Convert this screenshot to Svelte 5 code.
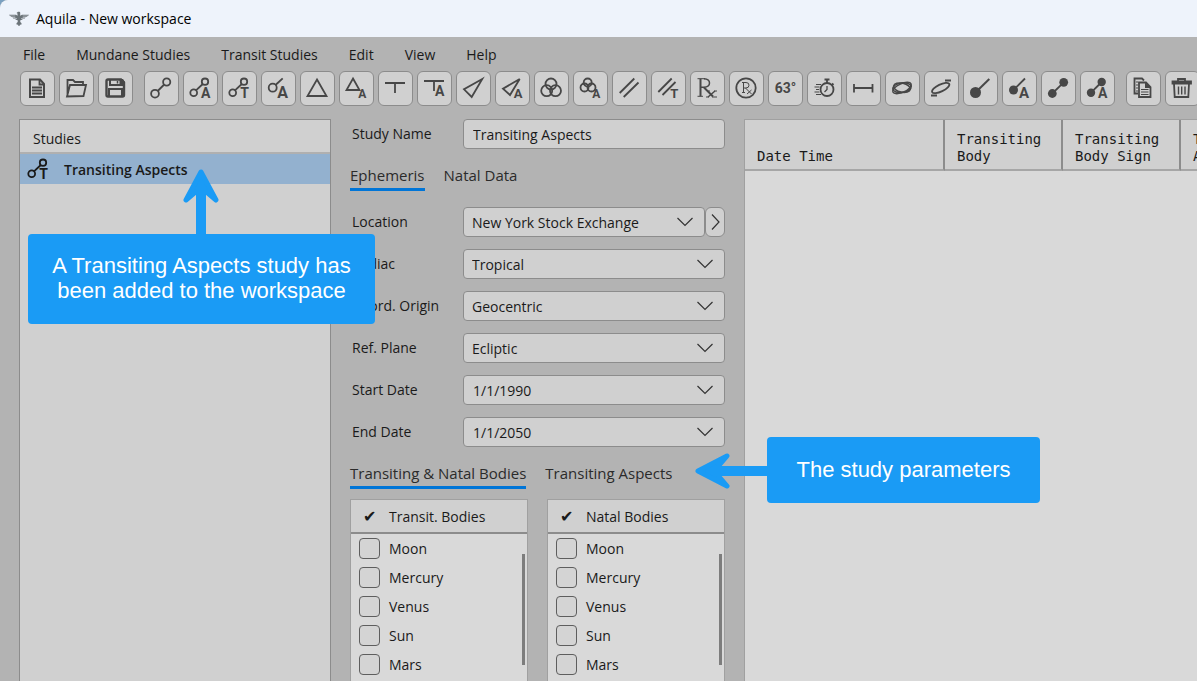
<script lang="ts">
  const menus = ['File', 'Mundane Studies', 'Transit Studies', 'Edit', 'View', 'Help'];

  const toolGroups: { id: string; label: string }[][] = [
    [
      { id: 'new', label: 'New workspace' },
      { id: 'open', label: 'Open workspace' },
      { id: 'save', label: 'Save workspace' },
    ],
    [
      { id: 'aspect', label: 'Aspects' },
      { id: 'aspect-a', label: 'Aspects, all' },
      { id: 'aspect-t', label: 'Transiting Aspects' },
      { id: 'single-a', label: 'Single body' },
      { id: 'triangle', label: 'Triangle' },
      { id: 'triangle-a', label: 'Triangle, all' },
      { id: 'tee', label: 'T-square' },
      { id: 'tee-a', label: 'T-square, all' },
      { id: 'yod', label: 'Yod' },
      { id: 'yod-a', label: 'Yod, all' },
      { id: 'cluster', label: 'Cluster' },
      { id: 'cluster-a', label: 'Cluster, all' },
      { id: 'parallel', label: 'Parallels' },
      { id: 'parallel-t', label: 'Transiting parallels' },
      { id: 'retro', label: 'Retrograde' },
      { id: 'retro-c', label: 'Retrograde period' },
      { id: 'degree', label: 'Degree' },
      { id: 'speed', label: 'Speed' },
      { id: 'distance', label: 'Distance' },
      { id: 'orbit', label: 'Orbits' },
      { id: 'latitude', label: 'Latitude extremes' },
      { id: 'ball', label: 'Ingress' },
      { id: 'ball-a', label: 'Ingress, all' },
      { id: 'pair', label: 'Body pair' },
      { id: 'pair-a', label: 'Body pair, all' },
    ],
    [
      { id: 'copy', label: 'Copy study' },
      { id: 'delete', label: 'Delete study' },
    ],
  ];

  const selects = [
    { id: 'zodiac', label: 'Zodiac', value: 'Tropical' },
    { id: 'origin', label: 'Coord. Origin', value: 'Geocentric' },
    { id: 'plane', label: 'Ref. Plane', value: 'Ecliptic' },
  ];
  const dates = [
    { id: 'start', label: 'Start Date', value: '1/1/1990' },
    { id: 'end', label: 'End Date', value: '1/1/2050' },
  ];

  const bodies = ['Moon', 'Mercury', 'Venus', 'Sun', 'Mars'];
  const bodyLists = [
    { id: 'transit', title: 'Transit. Bodies' },
    { id: 'natal', title: 'Natal Bodies' },
  ];

  let ephemerisTab = $state('Ephemeris');
  let bodiesTab = $state('Transiting & Natal Bodies');
  let studyName = $state('Transiting Aspects');
</script>

{#snippet chevron()}
  <svg class="chevron" width="16" height="10" viewBox="0 0 16 10" aria-hidden="true">
    <path d="M.5 1 8 8.5 15.5 1" />
  </svg>
{/snippet}

{#snippet tabs(names: string[], current: string, pick: (name: string) => void)}
  <div class="tabs" role="tablist">
    {#each names as name}
      <button
        class="tab"
        class:tab-active={name === current}
        role="tab"
        aria-selected={name === current}
        onclick={() => pick(name)}>{name}</button>
    {/each}
  </div>
{/snippet}

{#snippet icon(id: string)}
  <svg class="icon" viewBox="1 1 33 33" aria-hidden="true">
    {#if id === 'new'}
      <path stroke-width="2" d="M10 8.5h10l4 4.5v13H10z" />
      <path d="M19.5 8.5v5H24M12 16.5h10M12 19.5h10M12 22.5h10" />
    {:else if id === 'open'}
      <path d="M8.5 25V9H14l2 2h8v3M8 25.5 11 14h16l-2.5 11z" />
    {:else if id === 'save'}
      <path stroke-width="2.4" d="M8.5 10q0-1.5 1.5-1.5h13l3 3V24q0 1.5-1.5 1.5H10q-1.5 0-1.5-1.5z" />
      <path stroke-width="2" d="M11 25v-7h13v7M12 9v5h10" />
      <path stroke-width="1.5" d="M19.5 10v2.5" />
      <path class="fill" d="M21.5 8H25l2 3v4h-5.5z" />
    {:else if id === 'aspect'}
      <circle cx="11" cy="22.7" r="3.9" /><circle cx="22.7" cy="11" r="3.6" />
      <path d="M13.7 20 20.2 13.5" />
    {:else if id === 'aspect-a' || id === 'aspect-t'}
      <circle cx="10.7" cy="21.7" r="3.4" /><circle cx="22" cy="10.7" r="3.2" />
      <path d="M13 19.3 19.8 13" />
      <text x="22.7" y="27" font-size="14">{id === 'aspect-a' ? 'A' : 'T'}</text>
    {:else if id === 'single-a'}
      <circle cx="11.7" cy="16.7" r="4" /><path d="M14.5 14 21.7 7.3" />
      <text x="21.5" y="26.7" font-size="16">A</text>
    {:else if id === 'triangle'}
      <path d="M17 8.5 26.5 25h-19z" />
    {:else if id === 'triangle-a'}
      <path d="M14 7.5 20.5 19h-13z" />
      <text x="23.2" y="27" font-size="12">A</text>
    {:else if id === 'tee'}
      <path d="M7 12h20M17 12v10" />
    {:else if id === 'tee-a'}
      <path d="M7 10h20M17 10v10" />
      <text x="22.7" y="25" font-size="14">A</text>
    {:else if id === 'yod'}
      <path d="M26.3 8 8 18.3 15.7 26z" />
    {:else if id === 'yod-a'}
      <path d="M24.7 8 8 17.7 15 24z" />
      <text x="23" y="27" font-size="13">A</text>
    {:else if id === 'cluster'}
      <circle cx="17" cy="13" r="5.5" /><circle cx="12.7" cy="19.7" r="5.5" /><circle cx="21.5" cy="19.7" r="5.5" />
    {:else if id === 'cluster-a'}
      <circle cx="14.7" cy="11.5" r="4" /><circle cx="11.5" cy="16.5" r="4" /><circle cx="18.5" cy="16.5" r="4" />
      <text x="23.2" y="27" font-size="12">A</text>
    {:else if id === 'parallel'}
      <path d="M22.3 7.5 7.7 22M26.5 11.5 11.7 26" />
    {:else if id === 'parallel-t'}
      <path d="M20.7 7.5 7.3 21M24.5 11 11.5 24" />
      <text x="23.2" y="27" font-size="13">T</text>
    {:else if id === 'retro'}
      <path stroke-width="1" d="M7.5 7.7H15M7.5 25.3H13M17 20h3M24 20h3M16 26h3M22 26h5" />
      <path stroke-width="2" d="M10.5 7.7v17.6M14 16.5l9 9" />
      <path stroke-width="1.5" d="M14 7.7q5.5.3 5.5 4.3T14 16.3h-3M25 20l-7 6" />
    {:else if id === 'retro-c'}
      <circle cx="17" cy="17" r="9.7" />
      <path stroke-width="1" d="M13 11.5h4q3 0 3 2.7T17 17h-2.5M14.5 11.5v10M13 21.5h3M16.5 17l6 6M22.5 19 18 23" />
    {:else if id === 'degree'}
      <text class="degree" x="17.5" y="22" font-size="14">63°</text>
    {:else if id === 'speed'}
      <circle cx="20" cy="18.5" r="6.5" />
      <path d="M20 12V9M17.5 8.5h5M25 12.5l1.5 1.5" />
      <path stroke-width="1.3" d="M20 15v3.5L17.5 21" />
      <path stroke-width="1" d="M9 13.5h5M7.5 16h5M9 18.5h3M7.5 21h5M9 23.5h5" />
    {:else if id === 'distance'}
      <path d="M8 17h18.5M8 13v8.5M26.5 13v8.5" />
    {:else if id === 'orbit'}
      <g stroke-width="1.5">
        <ellipse cx="17" cy="16.7" rx="9.3" ry="4.8" transform="rotate(-8 17 16.7)" />
        <ellipse cx="17" cy="16.7" rx="8.5" ry="4.5" transform="rotate(12 17 16.7)" />
        <ellipse cx="17" cy="17" rx="10" ry="4.3" transform="rotate(-24 17 17)" />
      </g>
    {:else if id === 'latitude'}
      <ellipse cx="16.7" cy="17" rx="9.5" ry="3.5" transform="rotate(-26 16.7 17)" />
      <path d="M7 24.5h6M21 9.5h6" />
    {:else if id === 'ball'}
      <circle class="fill" cx="12.5" cy="21.5" r="5.5" /><path stroke-width="2" d="M12.5 21.5 26.3 8" />
    {:else if id === 'ball-a'}
      <circle class="fill" cx="11.5" cy="19" r="4.5" /><path d="M11.5 19 23 7.5" />
      <text x="22" y="26.5" font-size="15">A</text>
    {:else if id === 'pair'}
      <circle class="fill" cx="11.3" cy="22.5" r="4.4" /><circle class="fill" cx="22.7" cy="11.3" r="4.4" />
      <path d="M11.3 22.5 22.7 11.3" />
    {:else if id === 'pair-a'}
      <circle class="fill" cx="11" cy="21.7" r="4.2" /><circle class="fill" cx="21.7" cy="11" r="4.2" />
      <path d="M11 21.7 21.7 11" />
      <text x="22.7" y="27" font-size="14">A</text>
    {:else if id === 'copy'}
      <path d="M12 22.5H8.5v-15H16l2 2M10.5 11h1M10.5 14h1M10.5 17h1M10.5 20h1" />
      <path d="M13 11.5h7l4.5 4.5v10H13z" />
      <path class="fill" d="M19 11.5V17h6z" />
      <path stroke-width="1" d="M15 18.5h7.5M15 21h7.5M15 23.5h7.5" />
    {:else if id === 'delete'}
      <path d="M7.5 10.5H26v2H7.5zM13 10V8h7v2M9 12.5 9.7 26h13.6L24 12.5" />
      <path stroke-width="1.4" d="M13.5 15.5v8M16.7 15.5v8M20 15.5v8" />
    {/if}
  </svg>
{/snippet}

<div class="desktop">
  <div class="window">
    <header class="titlebar">
      <svg class="logo" width="20" height="16" viewBox="0 0 20 16" aria-hidden="true">
        <path d="M0 3.800h7l1.500 1V2.500L7.500 2 9 .7h1.500l.7.800v3.300l1.800-1h7l-.8.900h-5.500v.5h5l-1 .9h-4v.5h3l-1 .9H12v.5h2l-1.500 1h-1l-.3 2 1.800 1.500-1 .2.500 1.300-1.500-.5-.5 1.500h-1L9 13.500l-1.500.5.500-1.300-1-.2L8.800 11l-.3-2h-1L6 8h2v-.5H4.300l-1-.9h3v-.5h-4l-1-.9h5v-.5H.8z" />
      </svg>
      <h1>Aquila - New workspace</h1>
    </header>

    <nav class="menubar">
      {#each menus as menu}
        <button class="menu">{menu}</button>
      {/each}
    </nav>

    <div class="toolbar" role="toolbar" aria-label="Studies">
      {#each toolGroups as group}
        <div class="tool-group">
          {#each group as tool}
            <button class="tool" aria-label={tool.label}>{@render icon(tool.id)}</button>
          {/each}
        </div>
      {/each}
    </div>

    <main class="workspace">
      <section class="studies">
        <h2>Studies</h2>
        <button class="study">
          {@render icon('aspect-t')}
          <span>Transiting Aspects</span>
        </button>
      </section>

      <section class="params">
        <div class="field">
          <label for="study-name">Study Name</label>
          <input class="box" id="study-name" type="text" bind:value={studyName} />
        </div>

        {@render tabs(['Ephemeris', 'Natal Data'], ephemerisTab, (name) => (ephemerisTab = name))}

        <div class="fields">
          <div class="field">
            <label for="location">Location</label>
            <div class="location">
              <div class="combo">
                <select class="box" id="location"><option>New York Stock Exchange</option></select>
                {@render chevron()}
              </div>
              <button class="more" aria-label="Edit location">
                <svg width="9" height="16" viewBox="0 0 9 16" aria-hidden="true"><path d="M1 .5 8 8 1 15.5" /></svg>
              </button>
            </div>
          </div>
          {#each selects as field}
            <div class="field">
              <label for={field.id}>{field.label}</label>
              <div class="combo">
                <select class="box" id={field.id}><option>{field.value}</option></select>
                {@render chevron()}
              </div>
            </div>
          {/each}
          {#each dates as field}
            <div class="field">
              <label for={field.id}>{field.label}</label>
              <div class="combo">
                <input class="box" id={field.id} type="text" value={field.value} />
                {@render chevron()}
              </div>
            </div>
          {/each}
        </div>

        {@render tabs(['Transiting & Natal Bodies', 'Transiting Aspects'], bodiesTab, (name) => (bodiesTab = name))}

        <div class="body-lists">
          {#each bodyLists as list}
            <div class="body-list">
              <h3><span class="tick">✔</span>{list.title}</h3>
              <ul>
                {#each bodies as body}
                  <li>
                    <label><input type="checkbox" name={list.id} value={body} />{body}</label>
                  </li>
                {/each}
              </ul>
              <div class="thumb"></div>
            </div>
          {/each}
        </div>
      </section>

      <section class="results">
        <table>
          <thead>
            <tr>
              <th class="wide">Date Time</th>
              <th>Transiting Body</th>
              <th>Transiting Body Sign</th>
              <th>Transiting Aspect</th>
            </tr>
          </thead>
        </table>
      </section>
    </main>
  </div>

  <div class="callout callout-study">
    <svg class="arrow-up" width="36" height="66" viewBox="0 0 36 66" aria-hidden="true">
      <path class="shaft" d="M18 66V10" /><path class="head" d="M18 4 3 32l10-8.5h10L33 32z" />
    </svg>
    A Transiting Aspects study has been added to the workspace
  </div>
  <div class="callout callout-params">
    <svg class="arrow-left" width="72" height="36" viewBox="0 0 72 36" aria-hidden="true">
      <path class="shaft" d="M72 18H10" /><path class="head" d="M3 18 32 3l-8.5 10v10L32 33z" />
    </svg>
    The study parameters
  </div>
</div>

<style>
  :global(body) {
    background: #b3b3b3;
  }

  .desktop {
    position: relative;
    height: 100vh;
    overflow: hidden;
    background: #7ba0c0;
    font-family: 'Open Sans', 'Noto Sans', sans-serif;
    font-size: 14px;
    line-height: 20px;
    color: #1a1a1a;
  }
  .desktop * {
    box-sizing: border-box;
  }
  .window {
    display: flex;
    flex-direction: column;
    height: 100%;
    border-top-left-radius: 8px;
    overflow: hidden;
    background: #b3b3b3;
  }
  button,
  input,
  select {
    font: inherit;
    color: inherit;
  }
  button {
    padding: 0;
    border: none;
    background: none;
    white-space: nowrap;
  }
  h1,
  h2,
  h3 {
    margin: 0;
    font-size: 14px;
    font-weight: 400;
  }

  /* Title, menu and toolbar */
  .titlebar {
    display: flex;
    flex: none;
    align-items: center;
    gap: 7px;
    height: 37px;
    padding-left: 9px;
    background: #eef3fb;
    color: #000;
  }
  .logo {
    fill: #6b7378;
  }
  .menubar {
    display: flex;
    flex: none;
    gap: 31px;
    padding: 8px 0 0 23px;
  }
  .toolbar {
    display: flex;
    flex: none;
    gap: 11px;
    padding: 6px 0 13px 20px;
  }
  .tool-group {
    display: flex;
    gap: 4px;
  }
  .tool {
    flex: none;
    width: 35px;
    height: 35px;
    border: 1px solid #8c8c8c;
    border-radius: 6px;
    background: #d0d0d0;
    color: #474747;
  }
  .icon {
    display: block;
    flex: none;
    width: 33px;
    height: 33px;
    fill: none;
    stroke: currentColor;
    stroke-width: 1.8;
  }
  .icon .fill {
    fill: currentColor;
    stroke: none;
  }
  .icon text {
    fill: currentColor;
    stroke: none;
    font-family: Roboto, sans-serif;
    font-weight: 700;
    text-anchor: middle;
  }

  /* Panels */
  .workspace {
    display: grid;
    flex: 1;
    grid-template-columns: 312px 375px minmax(0, 1fr);
    gap: 19px;
    min-height: 0;
    padding-left: 19px;
  }
  .studies {
    border: 1px solid #8c8c8c;
    border-bottom: none;
    background: #d0d0d0;
  }
  .studies h2 {
    padding: 9px 13px 3px;
    border-bottom: 2px solid #b0b0b0;
  }
  .study {
    display: flex;
    align-items: center;
    gap: 9px;
    width: 100%;
    height: 30px;
    padding: 1px 0 0 2px;
    background: #93b1cf;
    font-weight: 600;
  }

  .params {
    display: flex;
    flex-direction: column;
    min-height: 0;
  }
  .field {
    display: grid;
    grid-template-columns: 113px minmax(0, 1fr);
  }
  .field > label {
    padding: 5px 0 5px 2px;
  }
  .fields {
    display: grid;
    gap: 12px;
    margin: 16px 0;
  }
  .location {
    display: flex;
  }
  .combo {
    position: relative;
    flex: 1;
  }
  .box {
    display: block;
    width: 100%;
    height: 30px;
    padding: 0 9px;
    border: 1px solid #8c8c8c;
    border-radius: 4px;
    background: #d0d0d0;
    appearance: none;
    outline: none;
  }
  select.box {
    padding: 2px 8px 0;
  }
  .chevron {
    position: absolute;
    top: 10px;
    right: 12px;
    pointer-events: none;
  }
  .chevron,
  .more svg {
    fill: none;
    stroke: #333;
    stroke-width: 1.2;
  }
  .more {
    display: flex;
    align-items: center;
    justify-content: center;
    width: 20px;
    border: 1px solid #8c8c8c;
    border-radius: 6px;
    background: #d0d0d0;
  }

  .tabs {
    display: flex;
    gap: 19px;
  }
  .params > .field + .tabs {
    margin-top: 16px;
  }
  .tab {
    padding-bottom: 3px;
    border-bottom: 3px solid transparent;
    color: #2b2b2b;
    font-size: 15px;
    line-height: 20px;
  }
  .tab-active {
    border-bottom-color: #0075d7;
  }

  .body-lists {
    display: grid;
    flex: 1;
    grid-template-columns: 1fr 1fr;
    gap: 19px;
    min-height: 0;
    margin-top: 10px;
  }
  .body-list {
    position: relative;
    border: 1px solid #a0a0a0;
    border-bottom: none;
    background: #d9d9d9;
    overflow: hidden;
  }
  .body-list h3 {
    display: flex;
    height: 34px;
    padding: 7px 0 0 12px;
    border-bottom: 2px solid #8c8c8c;
    background: #d0d0d0;
  }
  .tick {
    width: 26px;
    font-family: 'DejaVu Sans', sans-serif;
    font-size: 16px;
  }
  .body-list ul {
    margin: 0;
    padding: 0;
    list-style: none;
  }
  .body-list label {
    display: flex;
    align-items: center;
    gap: 9px;
    height: 29px;
    padding-left: 8px;
  }
  .body-list input {
    width: 21px;
    height: 21px;
    margin: 0;
    border: 1px solid #5e5e5e;
    border-radius: 4px;
    background: #d4d4d4;
    appearance: none;
  }
  .thumb {
    position: absolute;
    top: 54px;
    right: 2px;
    width: 3px;
    height: 111px;
    background: #7d7d7d;
  }

  .results {
    overflow: hidden;
    border: 1px solid #a0a0a0;
    border-width: 1px 0 0 1px;
    background: #d9d9d9;
  }
  table {
    width: 554px;
    table-layout: fixed;
    border-collapse: separate;
    border-spacing: 0;
  }
  th {
    width: 118px;
    height: 51px;
    padding: 0 11px 4px 12px;
    border-right: 2px solid #8c8c8c;
    border-bottom: 2px solid #a6a6a6;
    background: #d0d0d0;
    font-family: 'DejaVu Sans Mono', monospace;
    font-size: 14px;
    font-weight: 400;
    line-height: 17px;
    text-align: left;
    vertical-align: bottom;
  }
  .wide {
    width: 200px;
  }

  /* Tutorial callouts lie over the window */
  .callout {
    position: absolute;
    padding: 19px 20px;
    border-radius: 4px;
    background: #1a9bf5;
    color: #fff;
    font-family: 'Liberation Sans', sans-serif;
    font-size: 22px;
    line-height: 25px;
    text-align: center;
  }
  .callout-study {
    top: 234px;
    left: 28px;
    width: 347px;
    height: 90px;
  }
  .callout-params {
    top: 437px;
    left: 767px;
    width: 273px;
    height: 66px;
    padding: 20px;
  }
  .callout svg {
    position: absolute;
    stroke: #1a9bf5;
    fill: none;
  }
  .callout .shaft {
    stroke-width: 10;
  }
  .callout .head {
    fill: #1a9bf5;
    stroke-width: 5;
    stroke-linejoin: round;
  }
  .arrow-up {
    bottom: 100%;
    left: 155px;
  }
  .arrow-left {
    top: 16px;
    right: 100%;
  }
</style>
